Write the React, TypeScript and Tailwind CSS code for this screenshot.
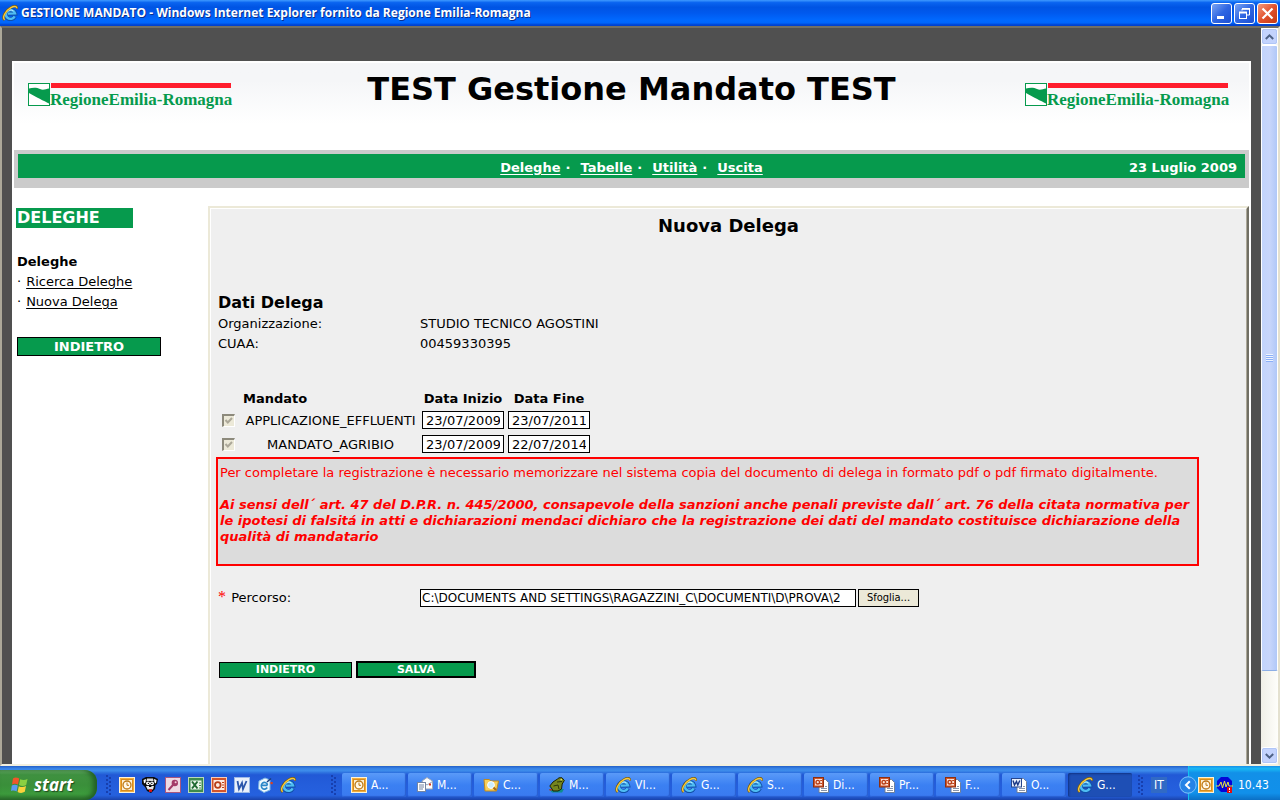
import type { ReactNode } from "react";

type IconName = "clock" | "mail" | "folder" | "frog" | "ie" | "ppt" | "doc";

const TASKS: { icon: IconName; label: string; active?: boolean }[] = [
  { icon: "clock", label: "A..." },
  { icon: "mail", label: "M..." },
  { icon: "folder", label: "C..." },
  { icon: "frog", label: "M..." },
  { icon: "ie", label: "VI..." },
  { icon: "ie", label: "G..." },
  { icon: "ie", label: "S..." },
  { icon: "ppt", label: "Di..." },
  { icon: "ppt", label: "Pr..." },
  { icon: "ppt", label: "F..." },
  { icon: "doc", label: "O..." },
  { icon: "ie", label: "G...", active: true },
];

const MANDATI = [
  { id: "effluenti", nome: "APPLICAZIONE_EFFLUENTI", inizio: "23/07/2009", fine: "23/07/2011" },
  { id: "agribio", nome: "MANDATO_AGRIBIO", inizio: "23/07/2009", fine: "22/07/2014" },
];

const NAV = ["Deleghe", "Tabelle", "Utilità", "Uscita"];

function Svg({ children, size = 16 }: { children: ReactNode; size?: number }) {
  return (
    <svg width={size} height={size} viewBox="0 0 16 16" className="shrink-0" aria-hidden="true">
      {children}
    </svg>
  );
}

function IeIcon() {
  return (
    <Svg>
      <path
        d="M12.9 11.4 A4.8 4.6 0 1 1 13.2 8.6 L6 8.8"
        fill="none"
        stroke="#0f4fa8"
        strokeWidth="4"
      />
      <path
        d="M12.7 11.4 A4.6 4.4 0 1 1 13 8.4 L6 8.6"
        fill="none"
        stroke="#4fbdf3"
        strokeWidth="2.4"
      />
      <path
        d="M5 7 A4.4 4.2 0 0 1 11.5 6"
        fill="none"
        stroke="#b5e8ff"
        strokeWidth="1"
      />
      <path
        d="M2.6 15 C-0.8 12.5 3.4 5.2 8.8 2.4 C12 0.6 15.4 0.6 15 3.6"
        fill="none"
        stroke="#7d5f10"
        strokeWidth="2.2"
      />
      <path
        d="M2.7 14.8 C-0.2 12.5 3.6 5.6 9 2.6 C12 1 14.9 0.9 14.8 3.2"
        fill="none"
        stroke="#f8ca3c"
        strokeWidth="1.4"
      />
    </Svg>
  );
}

function ClockIcon() {
  return (
    <Svg>
      <rect x="0.5" y="0.5" width="15" height="15" fill="#f2ad3c" stroke="#fff3d6" />
      <rect x="2.5" y="2.5" width="11" height="11" fill="#fdf0d2" stroke="#d98c1c" />
      <circle cx="8" cy="8" r="4" fill="#fff8e8" stroke="#bd7813" strokeWidth="1.3" />
      <path d="M8 5.5 V8.3 H10" fill="none" stroke="#bd7813" />
    </Svg>
  );
}

function DogIcon() {
  return (
    <Svg>
      <path d="M0 2 L4 0 H12 L16 2 L15 7 L13.5 8 L13 12 L9 16 L5 14 L3 10 L0 7 Z" fill="#0b0b0b" />
      <path d="M1.5 3 L4 2 L3.5 5.5 L2 6.5 Z" fill="#fff" />
      <path d="M12 2 L14.5 3 L14 6.5 L12.5 5.5 Z" fill="#fff" />
      <path d="M5 1.5 H11 L11.5 4 H4.5 Z" fill="#dcdcdc" />
      <circle cx="6" cy="6.3" r="1.9" fill="#fff" />
      <circle cx="10" cy="6.3" r="1.9" fill="#fff" />
      <rect x="5.8" y="5.8" width="1.2" height="1.2" fill="#000" />
      <rect x="9.2" y="5.8" width="1.2" height="1.2" fill="#000" />
      <path d="M4 9 H12 L11 12.5 H5.5 Z" fill="#e8e8e8" />
      <rect x="7" y="8.5" width="2.4" height="1.5" fill="#000" />
      <rect x="7" y="12.3" width="3" height="2.6" fill="#e01515" />
    </Svg>
  );
}

function KeyIcon() {
  return (
    <Svg>
      <rect x="0.5" y="0.5" width="15" height="15" fill="#efd9e3" stroke="#a8577f" />
      <circle cx="9.8" cy="6" r="3.2" fill="#a33a68" />
      <path d="M8 8 L3.5 13" stroke="#a33a68" strokeWidth="2" />
      <circle cx="10.6" cy="5.2" r="1" fill="#f3c9d8" />
    </Svg>
  );
}

function ExcelIcon() {
  return (
    <Svg>
      <rect x="0.5" y="0.5" width="15" height="15" fill="#3d8a4c" stroke="#b7d9bb" />
      <rect x="2.5" y="3.5" width="11" height="9" fill="#eaf6ea" />
      <path d="M4 4.5 L9.5 11.5 M9.5 4.5 L4 11.5" stroke="#1f6a31" strokeWidth="2" />
      <path d="M11 6 H13 M11 8.5 H13 M11 11 H13" stroke="#3d8a4c" />
    </Svg>
  );
}

function PowerPointIcon() {
  return (
    <Svg>
      <rect x="0.5" y="0.5" width="15" height="15" fill="#d3542a" stroke="#f6cdb9" />
      <rect x="2.5" y="3" width="11" height="10" fill="#fdece2" />
      <circle cx="6.8" cy="8" r="2.8" fill="none" stroke="#b83f18" strokeWidth="1.8" />
      <path d="M11 5.5 H13 M11 8 H13 M11 10.5 H13" stroke="#b83f18" />
    </Svg>
  );
}

function WordIcon() {
  return (
    <Svg>
      <rect x="0.5" y="0.5" width="15" height="15" fill="#e9f0fb" stroke="#9db9e6" />
      <path d="M3.5 4 L5 12 L8 6 L9 12 L12.5 4" fill="none" stroke="#2b56ab" strokeWidth="1.8" />
    </Svg>
  );
}

function MailNoteIcon() {
  return (
    <Svg>
      <path d="M2 4 L8 1 L13 3 L13 13 L7 15.5 L1.5 12 Z" fill="#f0f9ff" stroke="#7ab4e2" />
      <path d="M10.2 10.5 A3.2 3.4 0 1 1 10.3 7.2 L9.8 8.4 H5" fill="none" stroke="#2a86c8" strokeWidth="1.6" />
      <path d="M10 5 L14 1.5" stroke="#1c3f7c" strokeWidth="1.5" />
      <rect x="13.5" y="5" width="2.2" height="2.2" fill="#e0401b" />
    </Svg>
  );
}

function MailIcon() {
  return (
    <Svg>
      <path d="M5 4 L10 0.5 L15.5 4 V12 H5 Z" fill="#fdfdfd" stroke="#9ba6b8" />
      <path d="M5 4.5 L10 8 L15.5 4.5" fill="none" stroke="#9ba6b8" />
      <rect x="0.5" y="5.5" width="8" height="9" fill="#fff" stroke="#7485a3" />
      <path d="M2 8 H7 M2 10 H7 M2 12 H6" stroke="#7485a3" />
      <rect x="12" y="6.5" width="2" height="2" fill="#d8361c" />
    </Svg>
  );
}

function FolderIcon() {
  return (
    <Svg>
      <path d="M1 2.5 H6 L8 4 H15.5 L13.5 14 H2 Z" fill="#f7cf5b" stroke="#c18a1d" />
      <circle cx="8" cy="8" r="3.4" fill="#c9edff" stroke="#fff" />
      <path d="M10.5 10.5 L13 13" stroke="#a76a14" strokeWidth="2" />
    </Svg>
  );
}

function FrogIcon() {
  return (
    <Svg>
      <path d="M0 12 H15 L13 15.5 H3 Z" fill="#0e8d8a" />
      <path
        d="M3 12 L0.8 9 L4 5 L8.5 2 L10 0.8 L13 0.8 L15.3 3.5 L13.2 7 L12.5 12 L9 14 H4 Z"
        fill="#75851e"
        stroke="#1b2304"
      />
      <path d="M8 5 L13 4.5 M4.5 9 L9 8 L10 12" fill="none" stroke="#2b3508" />
      <rect x="11.5" y="1.8" width="1.5" height="1.5" fill="#e8e06a" />
      <rect x="0.5" y="12" width="2.2" height="1.5" fill="#c92b1a" />
    </Svg>
  );
}

function PptDocIcon() {
  return (
    <Svg>
      <path d="M6 2.5 H12.5 L15.5 5.5 V15.5 H6 Z" fill="#fff" stroke="#6d7f9b" />
      <path d="M8 11.5 H14 M8 13.5 H14 M12 9.5 H14" stroke="#8795ab" />
      <rect x="0.5" y="0.5" width="10" height="9.5" fill="#d2572d" stroke="#8c2f10" />
      <rect x="2" y="2" width="7" height="6.5" fill="#fbe3d8" />
      <circle cx="4.8" cy="5.2" r="1.8" fill="none" stroke="#b83f18" strokeWidth="1.4" />
      <path d="M7.2 3.5 H9 M7.2 6.5 H9" stroke="#b83f18" />
    </Svg>
  );
}

function WordDocIcon() {
  return (
    <Svg>
      <path d="M6 1.5 H12.5 L15.5 4.5 V15.5 H6 Z" fill="#fff" stroke="#6d7f9b" />
      <path d="M8 11.5 H14 M8 13.5 H14 M12 9.5 H14" stroke="#8795ab" />
      <rect x="0.5" y="1.5" width="10" height="8.5" fill="#e8effb" stroke="#27468c" />
      <path d="M2 3.5 L3.5 8 L5.5 4.5 L6.8 8 L8.8 3.5" fill="none" stroke="#1b3a86" strokeWidth="1.4" />
    </Svg>
  );
}

const ICONS: Record<IconName, () => ReactNode> = {
  clock: ClockIcon,
  mail: MailIcon,
  folder: FolderIcon,
  frog: FrogIcon,
  ie: IeIcon,
  ppt: PptDocIcon,
  doc: WordDocIcon,
};

function WindowButton({ label, close, children }: { label: string; close?: boolean; children: ReactNode }) {
  return (
    <button
      type="button"
      aria-label={label}
      className={`flex h-[21px] w-[21px] items-center justify-center rounded-[3px] border border-white bg-linear-to-br ${
        close ? "from-[#f0997c] via-[#e2512c] to-[#c23a12]" : "from-[#7ba3f2] via-[#2f66e2] to-[#1c4fd4]"
      }`}
    >
      <svg width="15" height="15" viewBox="0 0 15 15" fill="none" stroke="#fff" aria-hidden="true">
        {children}
      </svg>
    </button>
  );
}

function TitleBar() {
  return (
    <header className="flex h-[26px] shrink-0 items-center justify-between bg-[linear-gradient(180deg,#3f9aff_0%,#0a64f0_10%,#0054e3_28%,#0059ee_50%,#0069ff_78%,#0066fb_88%,#0042cf_96%)] pr-[2px] pl-[2px]">
      <div className="flex items-center gap-[3px]">
        <IeIcon />
        <span className="font-['Open_Sans',sans-serif] text-[12px] leading-4 font-bold whitespace-nowrap text-white [text-shadow:1px_1px_0_#0a2f8c]">
          GESTIONE MANDATO - Windows Internet Explorer fornito da Regione Emilia-Romagna
        </span>
      </div>
      <div className="flex gap-[2px]">
        <WindowButton label="Riduci a icona">
          <path d="M3 11.5 H10" strokeWidth="3" />
        </WindowButton>
        <WindowButton label="Ripristina">
          <path d="M5 4.5 V3 H12.5 V9 H10" />
          <path d="M5 2.8 H13" strokeWidth="1.6" />
          <rect x="2.5" y="6.5" width="7" height="6" />
          <path d="M2 6.5 H10" strokeWidth="2" />
        </WindowButton>
        <WindowButton label="Chiudi" close>
          <path d="M2.5 2.5 L12.5 12.5 M12.5 2.5 L2.5 12.5" strokeWidth="2.2" />
        </WindowButton>
      </div>
    </header>
  );
}

function RegionLogo() {
  return (
    <svg
      width="204"
      height="32"
      viewBox="0 0 204 32"
      className="overflow-visible"
      role="img"
      aria-label="Regione Emilia-Romagna"
    >
      <rect x="0.5" y="0.5" width="21" height="22" fill="#fff" stroke="#069a4d" />
      <path d="M1 5.5 C5 4.5 9 4.5 12 6 C15 7.5 18 6 21 5.5 V20.5 C16 18 8 14 1 10 Z" fill="#069a4d" />
      <rect x="23" y="0" width="180" height="5" fill="#ff1d2d" />
      <text x="22" y="22" fill="#069a4d" className="font-['Liberation_Serif',serif] text-[17px] font-bold">
        RegioneEmilia-Romagna
      </text>
    </svg>
  );
}

function Sidebar() {
  return (
    <aside className="w-[194px] shrink-0 pt-[2px] pl-[2px] text-[13px] leading-5">
      <h2 className="w-[117px] bg-[#069a4d] pl-px text-[16px] leading-5 font-bold text-white">DELEGHE</h2>
      <h3 className="mt-6 pl-px font-bold">Deleghe</h3>
      <ul className="pl-px">
        <li className="flex gap-[5px]">
          <span>·</span>
          <a href="#ricerca" className="underline underline-offset-2">Ricerca Deleghe</a>
        </li>
        <li className="flex gap-[5px]">
          <span>·</span>
          <a href="#nuova" className="underline underline-offset-2">Nuova Delega</a>
        </li>
      </ul>
      <button
        type="button"
        className="mt-[25px] ml-px block h-[19px] w-[144px] border border-black bg-[#069a4d] text-[13px] leading-4 font-bold text-white"
      >
        INDIETRO
      </button>
    </aside>
  );
}

function DateInput({ label, value }: { label: string; value: string }) {
  return (
    <input
      type="text"
      aria-label={label}
      defaultValue={value}
      className="block h-[18px] w-[82px] border border-black bg-white px-[3px] text-[13px] leading-4"
    />
  );
}

function MandatiTable() {
  return (
    <table className="mt-[35px] border-separate border-spacing-x-[4px] border-spacing-y-0 text-[13px] leading-[19px]">
      <thead>
        <tr className="font-bold">
          <td className="w-[17px]" />
          <th className="w-[175px] text-left">Mandato</th>
          <th className="w-[82px]">Data Inizio</th>
          <th className="w-[82px]">Data Fine</th>
        </tr>
      </thead>
      <tbody>
        {MANDATI.map((m) => (
          <tr key={m.id} className="h-6">
            <td>
              <div className="relative h-[13px] w-[13px]">
                <input
                  id={m.id}
                  type="checkbox"
                  defaultChecked
                  disabled
                  className="block h-[13px] w-[13px] appearance-none border-t-2 border-l-2 border-r border-b border-t-[#8d8a7c] border-r-[#fff] border-b-[#fff] border-l-[#8d8a7c] bg-[#ece9d8]"
                />
                <svg className="pointer-events-none absolute inset-0" width="13" height="13" viewBox="0 0 13 13">
                  <path d="M3.5 6 L5.8 8.5 L10 4" fill="none" stroke="#aca899" strokeWidth="2" />
                </svg>
              </div>
            </td>
            <td className="text-center">
              <label htmlFor={m.id}>{m.nome}</label>
            </td>
            <td>
              <DateInput label={`Data inizio ${m.nome}`} value={m.inizio} />
            </td>
            <td>
              <DateInput label={`Data fine ${m.nome}`} value={m.fine} />
            </td>
          </tr>
        ))}
      </tbody>
    </table>
  );
}

function DelegaForm() {
  return (
    <main className="min-w-0 flex-1 border-t-2 border-r-2 border-l-2 border-t-[#ece9d8] border-r-[#716f64] border-l-[#ece9d8]">
      <form className="h-full border-t border-r border-l border-t-white border-r-[#aca899] border-l-white bg-[#efefef] px-[7px] text-[13px] leading-5">
        <h1 className="pt-[5px] text-center text-[18px] leading-6 font-bold">Nuova Delega</h1>

        <h2 className="mt-[54px] text-[16px] leading-[22px] font-bold">Dati Delega</h2>
        <dl className="grid grid-cols-[202px_1fr]">
          <dt>Organizzazione:</dt>
          <dd>STUDIO TECNICO AGOSTINI</dd>
          <dt>CUAA:</dt>
          <dd>00459330395</dd>
        </dl>

        <MandatiTable />

        <div className="-ml-[2px] mt-px h-[109px] max-w-[983px] border-2 border-[#f00] bg-[#dcdcdc] pt-[6px] pl-[2px] leading-4 text-[#f00]">
          <p>
            Per completare la registrazione è necessario memorizzare nel sistema copia del documento di delega in
            formato pdf o pdf firmato digitalmente.
          </p>
          <p className="mt-4 font-bold italic">
            Ai sensi dell´ art. 47 del D.P.R. n. 445/2000, consapevole della sanzioni anche penali previste dall´ art.
            76 della citata normativa per le ipotesi di falsitá in atti e dichiarazioni mendaci dichiaro che la
            registrazione dei dati del mandato costituisce dichiarazione della qualità di mandatario
          </p>
        </div>

        <div className="mt-[21px] flex items-center">
          <label htmlFor="percorso" className="w-[202px]">
            <span className="pr-px font-['Liberation_Serif',serif] text-[16px] text-[#f00]">*</span> Percorso:
          </label>
          <input
            id="percorso"
            type="text"
            defaultValue="C:\DOCUMENTS AND SETTINGS\RAGAZZINI_C\DOCUMENTI\D\PROVA\2"
            className="h-[18px] w-[436px] border border-black bg-white px-px text-[12px] leading-4"
          />
          <button
            type="button"
            className="ml-[2px] h-[18px] w-[61px] border border-black bg-[#ece9d8] font-['DejaVu_Sans_Condensed','DejaVu_Sans',sans-serif] text-[11px] leading-4"
          >
            Sfoglia...
          </button>
        </div>

        <div className="mt-[53px] flex items-end gap-1 pl-px text-[11px] font-bold text-white">
          <button type="button" className="h-4 w-[133px] border border-black bg-[#069a4d] leading-3">
            INDIETRO
          </button>
          <button type="button" className="h-[17px] w-[120px] border-2 border-black bg-[#069a4d] leading-3">
            SALVA
          </button>
        </div>
      </form>
    </main>
  );
}

function ScrollBar() {
  const button =
    "flex h-[17px] w-[17px] shrink-0 items-center justify-center rounded-[3px] border border-white bg-[#c3d3fd] outline outline-[#b0c6f7] -outline-offset-2";
  return (
    <div className="flex w-[17px] shrink-0 flex-col bg-[#f6f5ef]">
      <button type="button" aria-label="Scorri su" className={button}>
        <svg width="9" height="6" viewBox="0 0 9 6" fill="none" stroke="#4d6185" strokeWidth="2">
          <path d="M0.8 5 L4.5 1.4 L8.2 5" />
        </svg>
      </button>
      <div className="flex grow-[625] items-center justify-center rounded-[2px] border border-white border-b-[#8caee6] bg-linear-to-r from-[#c2d4fc] via-[#c8d6fb] to-[#b0c8f8]">
        <span className="h-2 w-[7px] bg-[repeating-linear-gradient(180deg,#eef4fe_0_1px,#8cb0f8_1px_2px)]" />
      </div>
      <div className="grow-[77] bg-linear-to-r from-[#f0efe7] to-[#fefefb]" />
      <button type="button" aria-label="Scorri giù" className={button}>
        <svg width="9" height="6" viewBox="0 0 9 6" fill="none" stroke="#4d6185" strokeWidth="2">
          <path d="M0.8 1 L4.5 4.6 L8.2 1" />
        </svg>
      </button>
    </div>
  );
}

function Grip() {
  return (
    <svg width="6" height="20" viewBox="0 0 6 20" className="shrink-0" aria-hidden="true">
      {[0, 4, 8, 12, 16].map((y) => (
        <g key={y} fill="#173fae">
          <rect x="0" y={y} width="2" height="2" />
          <rect x="3" y={y + 2} width="2" height="2" />
        </g>
      ))}
    </svg>
  );
}

function Taskbar() {
  return (
    <footer className="flex h-[34px] shrink-0 bg-[linear-gradient(180deg,#2460c8_0%,#3a86e8_8%,#3d8ceb_14%,#2f74e0_19%,#2159d6_26%,#245edc_60%,#2561de_86%,#1a43ab_100%)] font-['DejaVu_Sans_Condensed','DejaVu_Sans',sans-serif] text-[12px] text-white">
      <button
        type="button"
        className="mt-1 flex h-[30px] w-[97px] shrink-0 items-center gap-[5px] rounded-r-[12px] bg-[linear-gradient(180deg,#6ab16b_0%,#3f9140_16%,#3a8f3a_50%,#3c9a3c_80%,#2c6e2d_100%)] pl-[11px] shadow-[inset_-4px_0_5px_#225f24]"
      >
        <svg width="18" height="18" viewBox="0 0 18 18" aria-hidden="true">
          <path d="M2 2.5 C4 1.2 6 1.4 8.2 2.6 L7 8.6 C5 7.5 3 7.4 1 8.4 Z" fill="#f0562a" />
          <path d="M9.2 3.2 C11.5 4.3 14 4.3 16.5 3 L15.2 9 C13 10.3 10.5 10.2 8 9.1 Z" fill="#8bd042" />
          <path d="M0.8 9.4 C3 8.4 5 8.6 6.8 9.6 L5.6 15.4 C4 14.4 2 14.2 0 15 Z" fill="#5b9bf2" />
          <path d="M7.8 10.2 C10.3 11.4 12.5 11.3 15 10 L13.8 15.8 C11.5 17.2 9 17.2 6.6 16 Z" fill="#fbd23c" />
        </svg>
        <span className="font-['Open_Sans',sans-serif] text-[17px] leading-6 font-bold italic [text-shadow:1px_1px_1px_#1d4a1e]">
          start
        </span>
      </button>

      <div className="flex items-center gap-[7px] pt-[3px] pl-[9px]">
        <Grip />
        <ClockIcon />
        <DogIcon />
        <KeyIcon />
        <ExcelIcon />
        <PowerPointIcon />
        <WordIcon />
        <MailNoteIcon />
        <IeIcon />
      </div>

      <div className="flex min-w-0 flex-1 items-center gap-[5px] pt-[3px] pl-[35px]">
        <Grip />
        <div className="flex min-w-0 flex-1 gap-[2px]">
          {TASKS.map((task, i) => {
            const Icon = ICONS[task.icon];
            return (
              <button
                key={i}
                type="button"
                className={`flex h-6 max-w-[64px] min-w-0 flex-1 items-center gap-1 rounded-[2px] pl-[9px] ${
                  task.active
                    ? "bg-[#1e4fb5] shadow-[inset_1px_1px_2px_#123484]"
                    : "bg-linear-to-b from-[#5a9af8] via-[#3b80f2] to-[#3a7af0] shadow-[inset_-1px_-1px_1px_#2a5fd0]"
                }`}
              >
                <Icon />
                <span>{task.label}</span>
              </button>
            );
          })}
        </div>
      </div>

      <div className="flex w-[50px] shrink-0 items-center gap-[7px] pt-[3px]">
        <Grip />
        <span className="bg-[#316ac5] px-[3px] leading-4">IT</span>
      </div>
      <div className="flex w-[92px] shrink-0 items-center gap-px border-l border-[#12c0f0] bg-[linear-gradient(180deg,#1a8fe8_0%,#19b9f4_8%,#1290e8_20%,#1190ea_80%,#0b6fc4_100%)] pt-[3px]">
        <button type="button" aria-label="Mostra icone nascoste" className="-ml-[10px]">
          <svg width="18" height="18" viewBox="0 0 18 18">
            <circle cx="9" cy="9" r="8.2" fill="#2583e6" stroke="#7fc4fa" />
            <path d="M10.8 5.2 L7 9 L10.8 12.8" fill="none" stroke="#fff" strokeWidth="2" />
          </svg>
        </button>
        <ClockIcon />
        <svg width="17" height="16" viewBox="0 0 17 16" className="ml-px" aria-hidden="true">
          <path d="M5 0 H12 L16 4 V11 L12 15 H5 L1 11 V4 Z" fill="#0404d8" />
          <path d="M0 9 H3 L5 5 L6.5 11 L8.5 4 L10 10 L12 5 L13 9 H17" fill="none" stroke="#e8e840" />
          <rect x="11" y="10" width="5" height="6" fill="#e80c0c" />
          <path d="M13.5 11 V13 M13.5 14 V15" stroke="#fff" />
        </svg>
        <time className="ml-1">10.43</time>
      </div>
    </footer>
  );
}

export default function App() {
  return (
    <div className="flex h-screen flex-col overflow-hidden bg-[#ece9d8] font-['DejaVu_Sans',sans-serif] text-black">
      <TitleBar />
      <div className="flex min-h-0 flex-1 border-t-2 border-r-2 border-b-2 border-l-2 border-t-[#716f64] border-r-[#e4e1d0] border-b-[#f3f0df] border-l-[#aca899]">
        <div className="flex min-w-0 flex-1 flex-col bg-[#505050] px-[10px] pt-[33px]">
          <div className="flex min-h-0 flex-1 flex-col bg-white px-[2px] pt-[2px]">
            <div className="grid h-[87px] shrink-0 grid-cols-[1fr_auto_1fr] items-start bg-linear-to-b from-[#f5f6f8] from-20% to-white to-70% px-[14px]">
              <div className="pt-5">
                <RegionLogo />
              </div>
              <p className="pt-[6px] text-[32px] leading-10 font-bold whitespace-nowrap">
                TEST Gestione Mandato TEST
              </p>
              <div className="flex justify-end pt-5 pr-[6px]">
                <RegionLogo />
              </div>
            </div>

            <div className="shrink-0 bg-[#cbcbcb] px-1 pt-1 pb-[10px]">
              <div className="grid h-6 grid-cols-[1fr_auto_1fr] items-center bg-[#069a4d] pt-[3px] pr-2 text-[13px] leading-5 font-bold text-white">
                <span />
                <nav className="flex pl-2">
                  {NAV.map((item, i) => (
                    <span key={item}>
                      <a href={`#${item.toLowerCase()}`} className="underline underline-offset-2">
                        {item}
                      </a>
                      {i < NAV.length - 1 && <span className="pr-[10px] pl-[5px]">·</span>}
                    </span>
                  ))}
                </nav>
                <time className="text-right">23 Luglio 2009</time>
              </div>
            </div>

            <div className="flex min-h-0 flex-1 pt-[18px]">
              <Sidebar />
              <DelegaForm />
            </div>
          </div>
        </div>
        <ScrollBar />
      </div>
      <Taskbar />
    </div>
  );
}
